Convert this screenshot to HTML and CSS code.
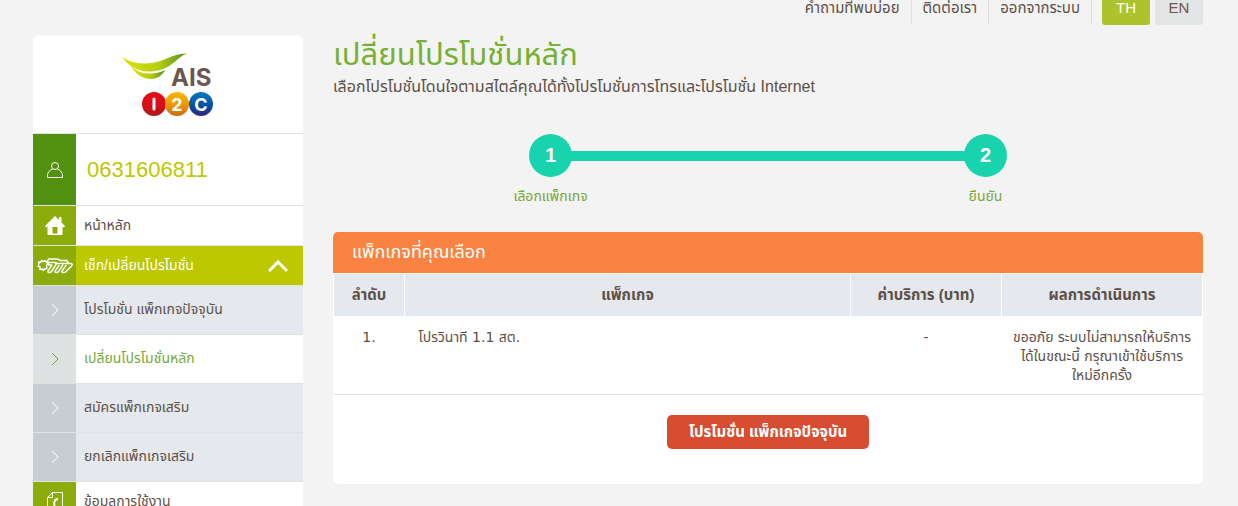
FILE: index.html
```html
<!DOCTYPE html>
<html lang="th">
  <head>
    <meta charset="utf-8">
    <title>เปลี่ยนโปรโมชั่นหลัก</title>
    <link rel="stylesheet" href="styles.css">
  </head>
  <body>
    <header class="topbar">
      <a class="top-link" href="#">คำถามที่พบบ่อย</a>
      <a class="top-link" href="#">ติดต่อเรา</a>
      <a class="top-link" href="#">ออกจากระบบ</a>
      <div class="langs">
        <button class="lang active" type="button">TH</button>
        <button class="lang" type="button">EN</button>
      </div>
    </header>

    <div class="layout">
      <aside class="sidebar">
        <a class="logo" href="#">
          <svg width="92" height="66" viewBox="0 0 92 66">
            <defs>
              <linearGradient id="leaf" x1="0" x2="1" y1="0" y2="0">
                <stop offset="0" stop-color="#dce000"/>
                <stop offset=".55" stop-color="#b8d010"/>
                <stop offset="1" stop-color="#4f9022"/>
              </linearGradient>
              <linearGradient id="red" x1="0" x2="0" y1="0" y2="1">
                <stop offset="0" stop-color="#e60d17"/>
                <stop offset=".55" stop-color="#d90d16"/>
                <stop offset="1" stop-color="#a91b18"/>
              </linearGradient>
              <linearGradient id="orange" x1="0" x2="0" y1="0" y2="1">
                <stop offset="0" stop-color="#fab400"/>
                <stop offset=".5" stop-color="#f09a00"/>
                <stop offset="1" stop-color="#c96a0c"/>
              </linearGradient>
              <linearGradient id="blue" x1="0" x2="0" y1="0" y2="1">
                <stop offset="0" stop-color="#0078c0"/>
                <stop offset=".5" stop-color="#0058a8"/>
                <stop offset="1" stop-color="#33267f"/>
              </linearGradient>
            </defs>
            <path d="M0 4C8 9 16 11 24 10.500 42 10 50 0 65 .500 60 2 56 6 52 9.500 43 17 34 19 24 18.500 13 17 6 12 0 4z" fill="url(#leaf)"/>
            <path d="M8 12c5 5 10 8 18 8.500 7 .5 12-1 17.500-3.500C40 22 36 26 28.500 26 20 26 13 20 8 12z" fill="url(#leaf)"/>
            <text class="logo-name" x="49" y="33">AIS</text>
            <circle cx="32" cy="51" r="12" fill="url(#red)"/>
            <circle cx="55" cy="51" r="12" fill="url(#orange)"/>
            <circle cx="79" cy="51" r="12" fill="url(#blue)"/>
            <path d="M32 46v10" stroke="#fff" stroke-width="3" stroke-linecap="round"/>
            <text class="logo-mark" x="55" y="58">2</text>
            <text class="logo-mark" x="79" y="58">C</text>
          </svg>
        </a>

        <div class="user">
          <span class="cell dark">
            <svg width="16" height="16" viewBox="0 0 16 16" fill="none" stroke="#fff">
              <circle cx="8" cy="4" r="3.5"/>
              <path d="M5.500 7C2.500 8 .5 11 .5 13v2.500h15V13c0-2-2-5-5-6"/>
            </svg>
          </span>
          <span class="phone">0631606811</span>
        </div>

        <nav>
          <a class="item" href="#">
            <span class="cell">
              <svg width="20" height="20" viewBox="0 0 20 20" fill="#fff">
                <path fill-rule="evenodd" d="M10 0l4 4V1h2.500v5.500L20 10l-1 1.500-1.500-1V19h-15v-8.500l-1.500 1L0 10zM7.500 11v6.500h5V11z"/>
              </svg>
            </span>
            <span class="label">หน้าหลัก</span>
          </a>
          <a class="item open" href="#">
            <span class="cell">
              <svg width="36" height="16" viewBox="0 0 36 16" fill="none" stroke="#fff" stroke-width="1.4" stroke-linejoin="round" stroke-linecap="round">
                <path d="M4.500 2.500l2 1 2-1 1 2 1.500 1-1.500 2 .5 3-2.500.5-1 1.500-1.500-1.500-2 .5V9L1 8l1-2-.5-2 2 .5z"/>
                <path d="M10.500 4l1-3h9l3 1.500h6.500l1.500 3"/>
                <path d="M11 4.500h7.500c1 0 1 1 .5 2l-4.500 7c-1 1.500-4.500 1.500-3.500-.5L15 7h-3.500z"/>
                <path d="M19 5.500h6c1 0 1 1 .5 2l-4 6c-1 1.500-4.500 1.500-3.500-.5L22 7.500"/>
                <path d="M26 5.500h8c1.500 0 1.500 1.500.5 2.500L29 13.500c-1.500 1.500-5 1.500-4-.5l4-5.500"/>
              </svg>
            </span>
            <span class="label">เช็ก/เปลี่ยนโปรโมชั่น</span>
            <svg class="arrow" width="20" height="12" viewBox="0 0 20 12" fill="none" stroke="#fff" stroke-width="3">
              <path d="M1 11l9-9 9 9"/>
            </svg>
          </a>
          <a class="item sub" href="#">
            <span class="cell"><svg width="8" height="14" viewBox="0 0 8 14"><path d="M1 1l6 6-6 6"/></svg></span>
            <span class="label">โปรโมชั่น แพ็กเกจปัจจุบัน</span>
          </a>
          <a class="item sub current" href="#">
            <span class="cell"><svg width="8" height="14" viewBox="0 0 8 14"><path d="M1 1l6 6-6 6"/></svg></span>
            <span class="label">เปลี่ยนโปรโมชั่นหลัก</span>
          </a>
          <a class="item sub" href="#">
            <span class="cell"><svg width="8" height="14" viewBox="0 0 8 14"><path d="M1 1l6 6-6 6"/></svg></span>
            <span class="label">สมัครแพ็กเกจเสริม</span>
          </a>
          <a class="item sub" href="#">
            <span class="cell"><svg width="8" height="14" viewBox="0 0 8 14"><path d="M1 1l6 6-6 6"/></svg></span>
            <span class="label">ยกเลิกแพ็กเกจเสริม</span>
          </a>
          <a class="item" href="#">
            <span class="cell">
              <svg width="16" height="20" viewBox="0 0 16 20" fill="none" stroke="#fff">
                <path d="M5.500.500h10v19H.500v-14zM5.500.500v5h-5"/>
                <path d="M11 7c-3 0-5 3-3 9" stroke-width="2"/>
              </svg>
            </span>
            <span class="label">ข้อมูลการใช้งาน</span>
          </a>
        </nav>
      </aside>

      <main>
        <h1>เปลี่ยนโปรโมชั่นหลัก</h1>
        <p class="intro">เลือกโปรโมชั่นโดนใจตามสไตล์คุณได้ทั้งโปรโมชั่นการโทรและโปรโมชั่น Internet</p>

        <ol class="steps">
          <li><span class="dot">1</span><span>เลือกแพ็กเกจ</span></li>
          <li><span class="dot">2</span><span>ยืนยัน</span></li>
        </ol>

        <section class="panel">
          <h2>แพ็กเกจที่คุณเลือก</h2>
          <table>
            <thead>
              <tr>
                <th class="no">ลำดับ</th>
                <th>แพ็กเกจ</th>
                <th class="fee">ค่าบริการ (บาท)</th>
                <th class="result">ผลการดำเนินการ</th>
              </tr>
            </thead>
            <tbody>
              <tr>
                <td>1.</td>
                <td class="name">โปรวินาที 1.1 สต.</td>
                <td>-</td>
                <td>ขออภัย ระบบไม่สามารถให้บริการ<br>ได้ในขณะนี้ กรุณาเข้าใช้บริการ<br>ใหม่อีกครั้ง</td>
              </tr>
            </tbody>
          </table>
          <div class="actions">
            <button class="btn" type="button">โปรโมชั่น แพ็กเกจปัจจุบัน</button>
          </div>
        </section>
      </main>
    </div>
  </body>
</html>
```
FILE: styles.css
```css
* {
  box-sizing: border-box;
}

body {
  margin: 0;
  height: 100vh;
  overflow: hidden;
  padding: 0 35px 0 33px;
  background-color: #f3f3f3;
  color: #5d5048;
  font-family: "Liberation Sans", "Noto Sans Thai", sans-serif;
  font-size: 15px;
}

a {
  color: inherit;
  text-decoration: none;
}

.topbar {
  display: flex;
  justify-content: flex-end;
  height: 25px;
  margin-bottom: 10px;
  line-height: 16px;
}

.top-link {
  padding: 0 11px;
  border-right: 1px solid #e0e2e2;
}

.langs {
  display: flex;
  gap: 5px;
  margin-left: 10px;
}

.lang {
  width: 48px;
  padding: 0 0 9px;
  border: 0;
  border-radius: 0 0 3px 3px;
  background-color: #e3e5e4;
  color: #6b5650;
  font: inherit;
}

.lang.active {
  background-color: #adc32b;
  color: #fff;
}

.layout {
  display: grid;
  grid-template-columns: 270px 1fr;
  gap: 30px;
}

.sidebar {
  overflow: hidden;
  border-radius: 5px 5px 0 0;
  background-color: #fff;
}

.logo {
  display: flex;
  justify-content: center;
  height: 99px;
  padding-top: 18px;
  border-bottom: 1px solid #e2e2e2;
}

.logo-name {
  fill: #6b5650;
  font: bold 24px Inter, sans-serif;
}

.logo-mark {
  fill: #fff;
  font: bold 18px Inter, sans-serif;
  text-anchor: middle;
}

.user,
.item {
  display: flex;
  border-bottom: 1px solid #e2e2e2;
}

.user {
  height: 72px;
}

.item {
  height: 40px;
}

.cell {
  display: flex;
  justify-content: center;
  align-items: center;
  flex: 0 0 43px;
  background-color: #8bac0a;
}

.cell.dark {
  background-color: #52900f;
}

.phone {
  padding-left: 11px;
  color: #bcc800;
  font-size: 22px;
  line-height: 72px;
}

.label {
  flex: 1;
  padding-left: 8px;
  font-size: 14px;
  line-height: 38px;
  white-space: nowrap;
}

.item.open {
  background-color: #bcc800;
  color: #fff;
}

.arrow {
  align-self: center;
  margin-right: 15px;
}

.item.sub {
  height: 49px;
  background-color: #e5e8ed;
}

.sub .label {
  line-height: 46px;
}

.sub .cell {
  background-color: #c8ccd3;
}

.sub svg {
  fill: none;
  stroke: #fff;
}

.item.current {
  background-color: #fff;
  color: #76a83a;
}

.current .cell {
  background-color: #dde1e2;
}

.current svg {
  stroke: #6da52f;
}

h1 {
  margin: 0;
  color: #76b135;
  font-size: 31px;
  font-weight: normal;
  line-height: 40px;
}

.intro {
  margin: 0;
  font-size: 16px;
  line-height: 24px;
}

.steps {
  display: flex;
  margin: 35px 0 25px;
  padding: 0;
  list-style: none;
}

.steps li {
  display: flex;
  flex: 1;
  flex-direction: column;
  align-items: center;
  gap: 8px;
  color: #76a83a;
  font-size: 14px;
  line-height: 22px;
}

/* the bar runs from the middle of one step to the next */
.steps li::before {
  content: "";
  width: 50%;
  height: 10px;
  margin: 17px 0 -35px;
  background-color: #19d3ae;
}

.steps li:first-child::before {
  align-self: flex-end;
}

.steps li:last-child::before {
  align-self: flex-start;
}

.dot {
  width: 43px;
  height: 43px;
  border-radius: 50%;
  background-color: #19d3ae;
  color: #fff;
  font-size: 20px;
  font-weight: bold;
  line-height: 43px;
  text-align: center;
}

.panel {
  border-radius: 5px;
  overflow: hidden;
  background-color: #fff;
}

h2 {
  margin: 0;
  padding-left: 19px;
  background-color: #fa8341;
  color: #fff;
  font-size: 18px;
  font-weight: normal;
  line-height: 41px;
}

table {
  width: 100%;
  table-layout: fixed;
  border-collapse: collapse;
  border-bottom: 1px solid #e2e2e2;
}

th {
  height: 43px;
  padding: 0;
  border: 1px solid #fff;
  background-color: #e5e8ed;
  background-clip: padding-box;
  font-size: 15px;
}

.no {
  width: 71px;
}

.fee {
  width: 151px;
}

.result {
  width: 201px;
}

td {
  padding: 11px 0 9px;
  font-family: "DejaVu Sans", "Noto Sans Thai", sans-serif;
  font-size: 14px;
  line-height: 19px;
  text-align: center;
  vertical-align: top;
}

td.name {
  padding-left: 14px;
  text-align: left;
}

.actions {
  padding: 20px 0 35px;
  text-align: center;
}

.btn {
  height: 34px;
  padding: 0 22px;
  border: 0;
  border-radius: 5px;
  background-color: #d64d32;
  color: #fff;
  font: bold 15px "Liberation Sans", "Noto Sans Thai", sans-serif;
}
```
